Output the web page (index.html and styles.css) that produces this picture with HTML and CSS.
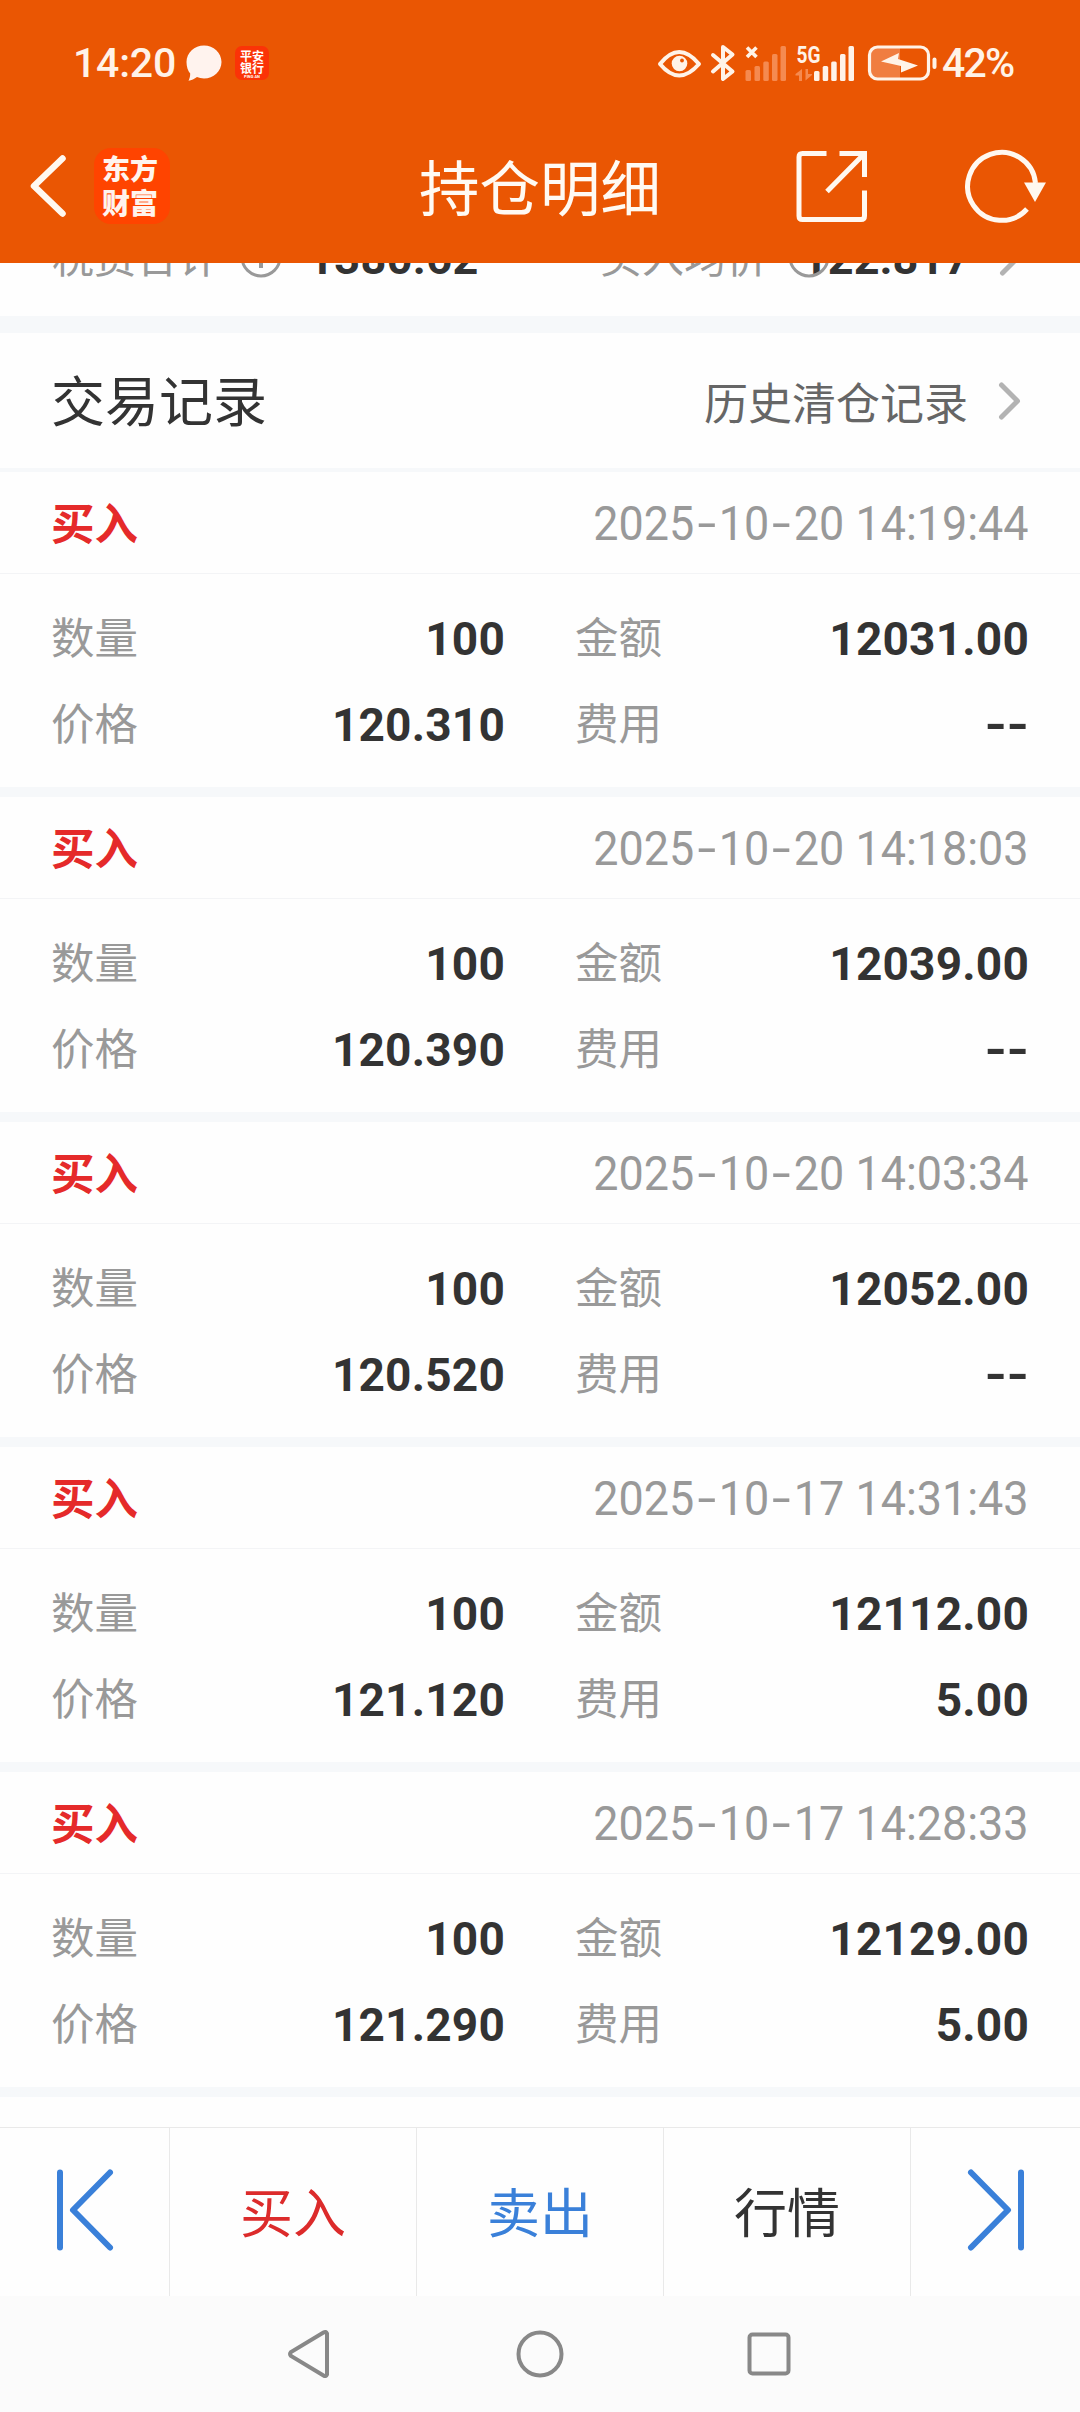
FILE: index.html
```html
<!DOCTYPE html>
<html lang="zh-CN">
<head>
<meta charset="utf-8">
<title>持仓明细</title>
<link rel="stylesheet" href="styles.css">
</head>
<body>
<div class="screen">
  <header class="top">
    <div class="status">
      <span class="clock">14:20</span>
      <svg class="bubble" width="36" height="36" viewBox="0 0 36 36"><path d="M18 0.5C27.500 .5 35.500 7.800 35.500 17S27.500 33.500 18 33.500c-2.600 0-5-.5-7-1.400-2.500 2-5.500 3.300-8.500 3.600 1.200-2 1.700-4.500 1.700-7.200C1.800 25.600.5 21.600.5 17 .5 7.800 8.500.5 18 .5z" fill="#fff3ee"/></svg>
      <span class="bank"><b>平安</b><b>银行</b><i>PING AN</i></span>
      <span class="spacer"></span>
      <svg class="sys" width="280" height="38" viewBox="0 0 280 38" fill="#fff3e8">
        <path d="M2 20Q21-4 41 20Q21 43 2 20Z" fill="none" stroke="#fff3e8" stroke-width="4" stroke-linejoin="round"/>
        <circle cx="21.500" cy="19.500" r="7.800"/><circle cx="24" cy="16.500" r="1.900" fill="#ea5603"/>
        <path d="M55 11L74.500 27.500L65 35V3L74.500 10.500L55 27.500" fill="none" stroke="#fff3e8" stroke-width="4" stroke-linejoin="round" stroke-linecap="round"/>
        <path d="M89 3.500L98.500 13M98.500 3.500L89 13" stroke="#fff3e8" stroke-width="3.600"/>
        <g fill="#f58a50"><rect x="87.500" y="26" width="5.500" height="11" rx="1.500"/><rect x="96.500" y="22" width="5.500" height="15" rx="1.500"/><rect x="105.300" y="17.500" width="5.500" height="19.500" rx="1.500"/><rect x="114" y="10" width="5.500" height="27" rx="1.500"/><rect x="122.500" y="2" width="5.500" height="35" rx="1.500"/>
        <path d="M137.500 30L144 25V37H141V31.500H137.500zM154 31L147.500 36.500V25H150V30H154z"/></g>
        <text x="138.500" y="18.500" class="g5" textLength="24" lengthAdjust="spacingAndGlyphs">5G</text>
        <rect x="156" y="27" width="5.500" height="10" rx="1.500"/><rect x="164.700" y="22" width="5.500" height="15" rx="1.500"/><rect x="173.200" y="17.500" width="5.500" height="19.500" rx="1.500"/><rect x="182" y="10" width="5.500" height="27" rx="1.500"/><rect x="190.500" y="2" width="5.500" height="35" rx="1.500"/>
        <path d="M219 3H242V35H219Q212 35 212 27V11Q212 3 219 3Z" fill="#f07d40"/>
        <rect x="211.500" y="3" width="59" height="32" rx="8" fill="none" stroke="#fff3e8" stroke-width="3.200"/>
        <path d="M223 17.500L241 9L240 15L260 21.500L243 28.500V22z"/>
        <rect x="274.500" y="13.500" width="4" height="11.500" rx="2"/>
      </svg>
      <span class="pct">42%</span>
    </div>
    <div class="bar">
      <svg class="back" width="38" height="64" viewBox="0 0 38 64"><path d="M33.500 4.500L5 32L33.500 59.500" fill="none" stroke="#fff8f0" stroke-width="6.500" stroke-linecap="round" stroke-linejoin="round"/></svg>
      <span class="logo"><b>东方</b><b>财富</b></span>
      <h1>持仓明细</h1>
      <svg class="share" width="74" height="74" viewBox="0 0 74 74" fill="none" stroke="#fff8f0" stroke-width="5"><path d="M31.500 4.500H7.500Q4 4.500 4 8V67Q4 70.500 7.500 70.500H66Q69.500 70.500 69.500 67V41.500M44.500 4.500H69.500V28M69.500 4.500L32 42.500"/></svg>
      <svg class="reload" width="82" height="76" viewBox="0 0 82 76"><path d="M70.500 35A34 34 0 1 0 62 61" fill="none" stroke="#fff8f0" stroke-width="5"/><path d="M59 34.500H81L70 54z" fill="#fff8f0"/></svg>
    </div>
  </header>

  <main>
    <div class="summary">
      <span class="k">税费合计</span>
      <svg class="info" width="42" height="42" viewBox="0 0 42 42" fill="none" stroke="#999" stroke-width="3"><circle cx="21" cy="21" r="19"/><path d="M21 18V32M21 11V14.500" stroke-width="4"/></svg>
      <span class="v v1">1380.62</span>
      <span class="k k2">买入均价</span>
      <span class="v v2"><svg class="info over" width="42" height="42" viewBox="0 0 42 42" fill="none" stroke="#999" stroke-width="3"><circle cx="21" cy="21" r="19"/></svg>122.817</span>
      <svg class="chev" width="24" height="40" viewBox="0 0 24 40"><path d="M3.500 4L19.500 20L3.500 36" fill="none" stroke="#b3b3b3" stroke-width="5" stroke-linecap="round" stroke-linejoin="round"/></svg>
    </div>
    <div class="section">
      <h2>交易记录</h2>
      <span class="history">历史清仓记录</span>
      <svg class="chev" width="24" height="40" viewBox="0 0 24 40"><path d="M3.500 4L19.500 20L3.500 36" fill="none" stroke="#b3b3b3" stroke-width="5" stroke-linecap="round" stroke-linejoin="round"/></svg>
    </div>

    <article class="trade">
      <div class="head"><b>买入</b><time>2025<s>-</s>10<s>-</s>20 14:19:44</time></div>
      <dl><div><dt>数量</dt><dd>100</dd></div><div><dt>金额</dt><dd>12031.00</dd></div><div><dt>价格</dt><dd>120.310</dd></div><div><dt>费用</dt><dd><s>-</s><s>-</s></dd></div></dl>
    </article>
    <article class="trade">
      <div class="head"><b>买入</b><time>2025<s>-</s>10<s>-</s>20 14:18:03</time></div>
      <dl><div><dt>数量</dt><dd>100</dd></div><div><dt>金额</dt><dd>12039.00</dd></div><div><dt>价格</dt><dd>120.390</dd></div><div><dt>费用</dt><dd><s>-</s><s>-</s></dd></div></dl>
    </article>
    <article class="trade">
      <div class="head"><b>买入</b><time>2025<s>-</s>10<s>-</s>20 14:03:34</time></div>
      <dl><div><dt>数量</dt><dd>100</dd></div><div><dt>金额</dt><dd>12052.00</dd></div><div><dt>价格</dt><dd>120.520</dd></div><div><dt>费用</dt><dd><s>-</s><s>-</s></dd></div></dl>
    </article>
    <article class="trade">
      <div class="head"><b>买入</b><time>2025<s>-</s>10<s>-</s>17 14:31:43</time></div>
      <dl><div><dt>数量</dt><dd>100</dd></div><div><dt>金额</dt><dd>12112.00</dd></div><div><dt>价格</dt><dd>121.120</dd></div><div><dt>费用</dt><dd>5.00</dd></div></dl>
    </article>
    <article class="trade">
      <div class="head"><b>买入</b><time>2025<s>-</s>10<s>-</s>17 14:28:33</time></div>
      <dl><div><dt>数量</dt><dd>100</dd></div><div><dt>金额</dt><dd>12129.00</dd></div><div><dt>价格</dt><dd>121.290</dd></div><div><dt>费用</dt><dd>5.00</dd></div></dl>
    </article>
  </main>

  <nav class="actions">
    <span><svg width="60" height="84" viewBox="0 0 60 84" fill="none" stroke="#3a80d9" stroke-width="6" stroke-linecap="round" stroke-linejoin="round"><path d="M5 4.500V79.500M55 4.500L18 42L55 79.500"/></svg></span>
    <span class="buy">买入</span>
    <span class="sell">卖出</span>
    <span>行情</span>
    <span><svg width="60" height="84" viewBox="0 0 60 84" fill="none" stroke="#3a80d9" stroke-width="6" stroke-linecap="round" stroke-linejoin="round"><path d="M55 4.500V79.500M5 4.500L42 42L5 79.500"/></svg></span>
  </nav>
  <footer class="keys">
    <svg width="48" height="52" viewBox="0 0 48 52" fill="none" stroke="#888" stroke-width="4"><path d="M41 5.500V46.500Q40 49 37.500 47.500L5 28Q3 26 5 24L37.500 4.500Q40 3 41 5.500Z"/></svg>
    <svg width="48" height="52" viewBox="0 0 48 52" fill="none" stroke="#888" stroke-width="4"><circle cx="24" cy="26" r="21.500"/></svg>
    <svg width="48" height="52" viewBox="0 0 48 52" fill="none" stroke="#888" stroke-width="4"><rect x="3.500" y="6.500" width="39" height="39" rx="3"/></svg>
  </footer>
</div>
</body>
</html>
```
FILE: styles.css
```css
* { box-sizing: border-box; }
body, h1, h2, dl, dt, dd { margin: 0; font-weight: 400; }
body { background: #fefefe; color: #333; font-family: "Noto Sans CJK SC", sans-serif; }
.screen { width: 1080px; height: 2412px; display: flex; flex-direction: column; overflow: hidden; }
svg { display: block; flex: none; }
s { text-decoration: none; display: inline-block; }

.top { height: 263px; flex: none; background: #ea5603; position: relative; }
.status { height: 104px; padding: 22px 63px 0 73px; display: flex; align-items: center; color: #fff3e8; font: 500 41px/80px Roboto, sans-serif; }
.clock { width: 113px; letter-spacing: -.2px; }
.bank { width: 34px; height: 34px; margin-left: 13px; border-radius: 7px; background: #fb3307; color: #fff; display: flex; flex-direction: column; align-items: center; padding-top: 4px; }
.bank b { font: 700 12px/12px "Noto Sans CJK SC", sans-serif; }
.bank i { font: 700 4px/5px Roboto, sans-serif; }
.spacer { flex: 1; }
.g5 { font: 700 23px Roboto, sans-serif; }
.sys { overflow: visible; }
.pct { width: 75px; margin-left: 4px; letter-spacing: -1.8px; }
.bar { height: 159px; display: flex; align-items: center; padding: 5px 31px 0 29px; }
.bar h1 { margin-left: 249px; width: 376px; font-size: 60.500px; line-height: 90px; padding-bottom: 2px; color: #fffaf3; }
.logo { width: 76px; height: 76px; margin-left: 27px; border-radius: 17px; background: #ff4400; color: #fff4ee; display: flex; flex-direction: column; align-items: center; padding: 3px 4px 0 0; }
.logo b { font-weight: 900; font-size: 28px; line-height: 34px; }
.reload { margin-left: 96px; }

.summary { height: 53px; display: flex; align-items: center; padding: 0 57px 0 52px; position: relative; }
.summary > * { flex: none; transform: translateY(-33px); }
.summary > .k { width: 168px; transform: translateY(-35px); }
.k { font-size: 42px; line-height: 60px; color: #999; }
.info { margin-left: 20px; }
.v { font: 700 45px/60px Roboto, sans-serif; }
.summary > .v { transform: translateY(-31px); }
.v1 { margin-left: 26px; width: 171px; letter-spacing: .4px; }
.k2 { margin-left: 121px; }
.v2 { position: relative; margin-left: 34px; width: 169px; }
.over { position: absolute; left: -14px; top: 7px; margin: 0; }
.summary .chev { margin-left: 28px; }
.section { height: 156px; border-top: 17px solid #f6f8fa; border-bottom: 4px solid #f6f8fa; padding: 0 58px 0 51px; display: flex; align-items: center; }
h2 { font-size: 54px; line-height: 80px; flex: 1; padding-bottom: 3px; }
.history { font-size: 44px; line-height: 66px; color: #666; margin-right: 30px; }

.top, .summary, .section, .trade { flex: none; }
.top { z-index: 1; }
.trade { height: 325px; border-bottom: 10px solid #f6f8fa; }
.head { height: 102px; border-bottom: 1px solid #f3f4f6; padding: 0 51px; display: flex; align-items: center; justify-content: space-between; }
.head b { font-size: 43.500px; line-height: 64px; padding-bottom: 2px; color: #e52a2a; }
time { font: 400 47.500px/64px Roboto, sans-serif; color: #999; padding-top: 3px; transform: scaleX(.945); transform-origin: right; }
time s { width: 26px; text-align: center; transform: scaleX(1.500); }
dl { padding: 21px 51px 0; display: grid; grid-template-columns: 454px 454px; column-gap: 70px; }
dl div { height: 86px; display: flex; align-items: center; justify-content: space-between; }
dt { font-size: 43.500px; line-height: 64px; padding-bottom: 4px; color: #999; }
dd { font: 700 46px/64px Roboto, sans-serif; letter-spacing: .2px; padding-top: 1px; }
dd s { width: 22px; text-align: center; transform: scaleX(1.250); }

main { height: 1864px; flex: none; }
.actions { height: 169px; flex: none; border-top: 1px solid #e9e9e9; display: grid; grid-template-columns: 170px 247px 247px 247px 169px; font-size: 53px; }
.actions span { display: flex; align-items: center; justify-content: center; border-right: 1px solid #e9e9e9; padding-bottom: 4px; }
.actions span:last-child { border: 0; }
.buy { color: #dc2b2b; }
.sell { color: #3a80d9; }
.keys { flex: 1; background: #fbfbfb; display: flex; justify-content: center; gap: 182px; padding-top: 32px; }
```
